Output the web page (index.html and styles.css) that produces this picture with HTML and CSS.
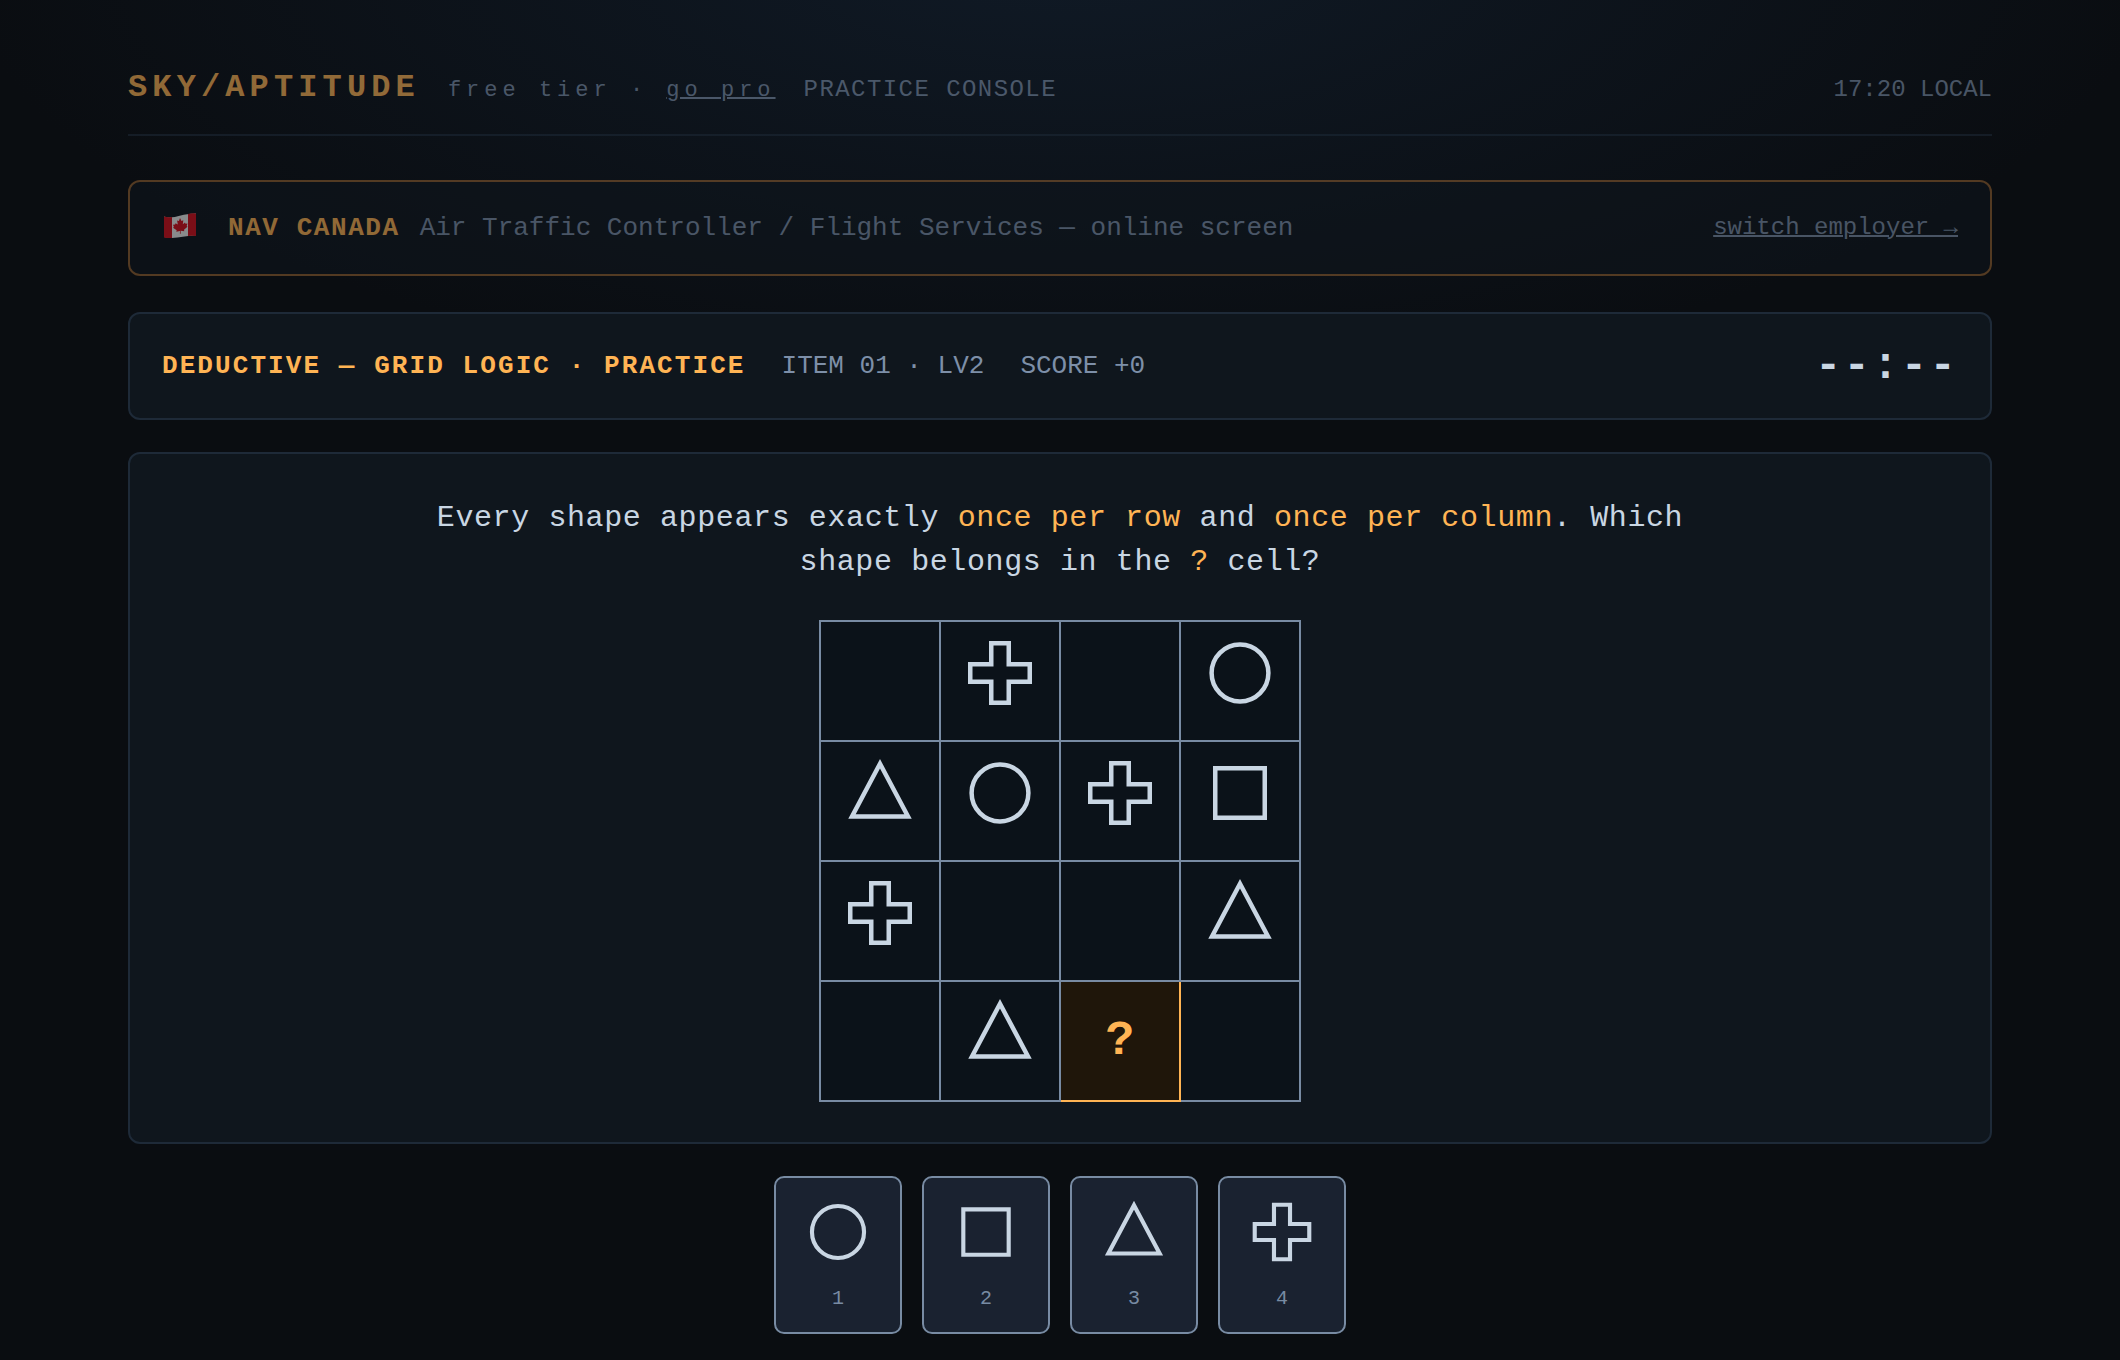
FILE: index.html
```html
<!DOCTYPE html>
<html lang="en">
<head>
<meta charset="utf-8">
<meta name="viewport" content="width=device-width, initial-scale=1">
<title>SKY/APTITUDE</title>
<link rel="stylesheet" href="styles.css">
</head>
<body>
<svg class="sprite" aria-hidden="true">
  <symbol id="circle" viewBox="0 0 72 72"><circle cx="36" cy="36" r="28.4"/></symbol>
  <symbol id="square" viewBox="0 0 72 72"><path d="M11.25 11.25h49.5v49.5h-49.5z"/></symbol>
  <symbol id="triangle" viewBox="0 0 72 72"><path d="M36 6.8 64 59.4H8z"/></symbol>
  <symbol id="cross" viewBox="0 0 72 72"><path d="M27.25 6.25h17.5v21h21v17.5h-21v21h-17.5v-21h-21v-17.5h21z"/></symbol>
</svg>
<div class="page">
  <header class="header">
    <div class="brand">SKY/APTITUDE<span class="tier">free tier · <a href="#pro">go pro</a></span></div>
    <div class="subtitle">PRACTICE CONSOLE</div>
    <div class="clock">17:20 LOCAL</div>
  </header>

  <section class="employer">
    <svg class="flag" viewBox="0 3 46 34" role="img" aria-label="Canada">
      <path fill="#f2f2f2" d="M2 8.500C11 12 20 5 34 5.500V27.500C22 27 14 32 2 29z"/>
      <path fill="#d8101c" d="M2 8.500Q6 9.800 10 9V30Q6 30.400 2 29.500zM26 6Q30 5 34 5.500V28Q30 27.600 26 28z"/>
      <path fill="#d8101c" d="M18 10l1.500 3 1.800-.8-.5 4 2.200-1.800.5 1.300 2-.2-.8 2.500.8.700-3.500 3 .3 1.500-3.700-.4.100 3h-.8l.1-2.900-3.700.900.400-1.600-3.700-2.400.9-.9-.9-2.200 2.100-.1.400-1.400 2.300 1.300-.7-3.900 1.800.5z"/>
    </svg>
    <strong class="employer-name">NAV CANADA</strong>
    <span class="employer-role">Air Traffic Controller / Flight Services — online screen</span>
    <a class="switch" href="#employers">switch employer →</a>
  </section>

  <section class="status">
    <h1 class="module">DEDUCTIVE — GRID LOGIC · PRACTICE</h1>
    <span>ITEM 01 · LV2</span>
    <span>SCORE +0</span>
    <span class="timer">--:--</span>
  </section>

  <main>
    <section class="puzzle">
      <p class="prompt">Every shape appears exactly <em>once per row</em> and <em>once per column</em>. Which shape belongs in the <em>?</em> cell?</p>
      <table class="grid">
        <tbody>
          <tr>
            <td></td>
            <td><svg class="shape"><use href="#cross"/></svg></td>
            <td></td>
            <td><svg class="shape"><use href="#circle"/></svg></td>
          </tr>
          <tr>
            <td><svg class="shape"><use href="#triangle"/></svg></td>
            <td><svg class="shape"><use href="#circle"/></svg></td>
            <td><svg class="shape"><use href="#cross"/></svg></td>
            <td><svg class="shape"><use href="#square"/></svg></td>
          </tr>
          <tr>
            <td><svg class="shape"><use href="#cross"/></svg></td>
            <td></td>
            <td></td>
            <td><svg class="shape"><use href="#triangle"/></svg></td>
          </tr>
          <tr>
            <td></td>
            <td><svg class="shape"><use href="#triangle"/></svg></td>
            <td class="target">?</td>
            <td></td>
          </tr>
        </tbody>
      </table>
    </section>

    <div class="options">
      <button class="option" type="button" aria-label="Circle, 1"><svg class="shape"><use href="#circle"/></svg><span>1</span></button>
      <button class="option" type="button" aria-label="Square, 2"><svg class="shape"><use href="#square"/></svg><span>2</span></button>
      <button class="option" type="button" aria-label="Triangle, 3"><svg class="shape"><use href="#triangle"/></svg><span>3</span></button>
      <button class="option" type="button" aria-label="Cross, 4"><svg class="shape"><use href="#cross"/></svg><span>4</span></button>
    </div>
  </main>
</div>
</body>
</html>
```

FILE: styles.css
```css
:root {
  --bg: #0a0d11;
  --panel: #0f161d;
  --cell: #0b1219;
  --raised: #1a2230;
  --line: #1e2a38;
  --dim: #7d8fa8;
  --edge: #788ba3;
  --text: #c9d6e3;
  --amber: #ffb454;
}

* {
  box-sizing: border-box;
}

body {
  margin: 0;
  min-height: 100vh;
  background: radial-gradient(1100px 440px at 50% -50px, #101a26, var(--bg)) no-repeat var(--bg);
  color: var(--text);
  font-family: "Courier New", "Liberation Mono", monospace;
  font-size: 26px;
  line-height: 32px;
}

a {
  color: var(--dim);
  text-decoration-thickness: 2px;
}

.sprite {
  display: none;
}

.page {
  padding: 70px 128px 26px;
}

.header {
  display: flex;
  align-items: baseline;
  gap: 28px;
  padding-bottom: 25px;
  border-bottom: 2px solid var(--line);
  color: var(--dim);
  font-size: 24px;
  line-height: 36px;
  opacity: 0.55;
}

.brand {
  color: var(--amber);
  font-size: 32px;
  font-weight: bold;
  letter-spacing: 0.16em;
}

.tier {
  margin-left: 28px;
  color: var(--dim);
  font-size: 22px;
  font-weight: normal;
  letter-spacing: 5px;
}

.subtitle {
  letter-spacing: 0.06em;
}

.clock,
.switch,
.timer {
  margin-left: auto;
}

.employer {
  display: flex;
  align-items: center;
  gap: 20px;
  min-height: 96px;
  margin-top: 44px;
  padding: 0 32px;
  border: 2px solid #8f5f30;
  border-radius: 12px;
  background: var(--panel);
  opacity: 0.55;
}

.flag {
  width: 46px;
  height: 34px;
}

.employer-name {
  color: var(--amber);
  letter-spacing: 0.06em;
}

.employer-role {
  color: var(--dim);
}

.switch {
  font-size: 24px;
}

.status {
  display: flex;
  align-items: center;
  gap: 36px;
  margin-top: 36px;
  padding: 28px 32px;
  border: 2px solid var(--line);
  border-radius: 12px;
  background: var(--panel);
  color: var(--dim);
}

.module {
  margin: 0;
  color: var(--amber);
  font-size: 26px;
  letter-spacing: 0.08em;
}

.timer {
  color: var(--text);
  font-size: 44px;
  font-weight: bold;
  line-height: 48px;
  letter-spacing: 0.05em;
}

.puzzle {
  margin-top: 32px;
  padding: 42px 40px 40px;
  border: 2px solid var(--line);
  border-radius: 12px;
  background: var(--panel);
}

.prompt {
  max-width: 1280px;
  margin: 0 auto 36px;
  font-size: 30px;
  line-height: 44px;
  letter-spacing: 0.02em;
  text-align: center;
}

.prompt em {
  color: var(--amber);
  font-style: normal;
}

.grid {
  margin: 0 auto;
  border-collapse: collapse;
  background: var(--cell);
}

.grid td {
  width: 120px;
  min-width: 120px;
  height: 120px;
  padding: 0 0 16px;
  border: 2px solid var(--edge);
  text-align: center;
}

.grid .target {
  padding: 0;
  border-color: var(--amber);
  background: #1f160a;
  color: var(--amber);
  font-size: 48px;
  font-weight: bold;
}

.shape {
  display: block;
  width: 72px;
  height: 72px;
  margin: 0 auto;
  fill: none;
  stroke: var(--text);
  stroke-width: 4.5;
}

.options {
  display: flex;
  justify-content: center;
  gap: 20px;
  margin-top: 32px;
}

.option {
  display: flex;
  flex-direction: column;
  align-items: center;
  gap: 22px;
  width: 128px;
  padding: 21px 0;
  border: 2px solid var(--edge);
  border-radius: 10px;
  background: var(--raised);
  color: var(--edge);
  font-family: inherit;
  font-size: 20px;
  line-height: 24px;
}

.option .shape {
  width: 66px;
  height: 66px;
}
```
